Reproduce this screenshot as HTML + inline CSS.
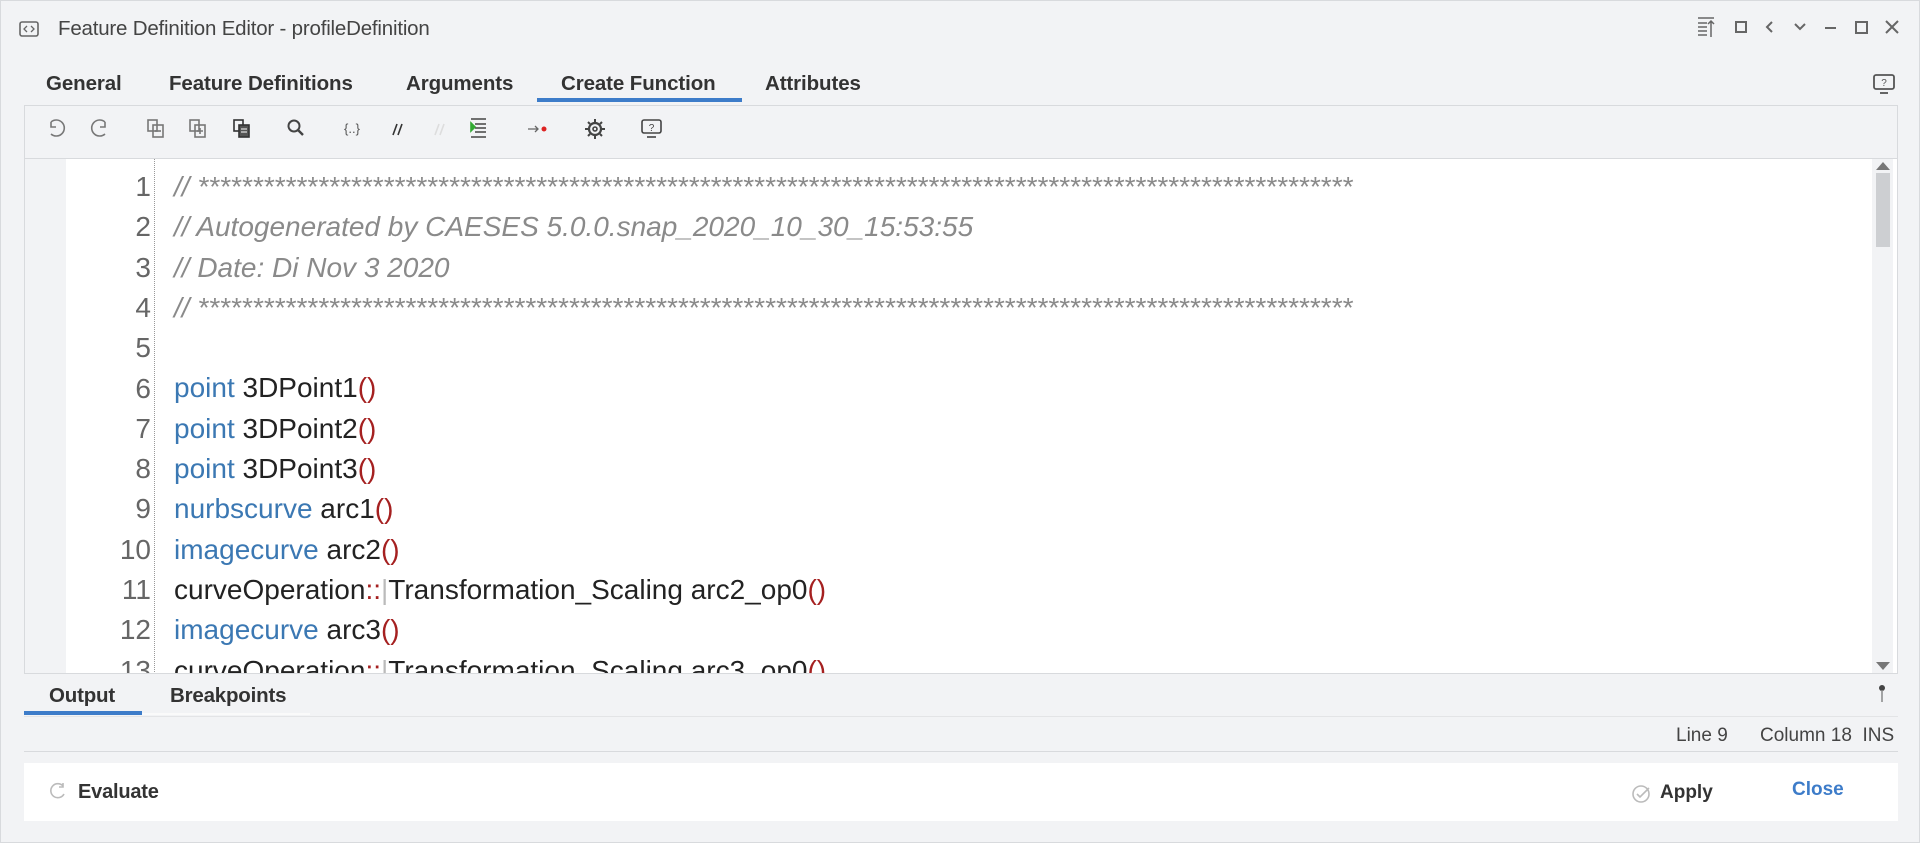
<!DOCTYPE html>
<html><head><meta charset="utf-8"><style>
*{margin:0;padding:0;box-sizing:border-box}
body{width:1920px;height:843px;background:#f2f3f5;font-family:"Liberation Sans",sans-serif;position:relative;overflow:hidden;border:1px solid #d8dadd}
.a{position:absolute;white-space:nowrap}
.tab{font-weight:bold;font-size:20.5px;color:#333;top:71px;letter-spacing:-0.1px}
.ln{position:absolute;right:0;width:80px;text-align:right;color:#666}
.code{font-size:28px;line-height:40.3px}
.cm{color:#8a8a8a;font-style:italic}
.kw{color:#3b78b3}
.p{color:#a52020}
</style></head><body>
<svg class="a" style="left:18px;top:20px" width="20" height="16" viewBox="0 0 20 16"><rect x="1" y="1" width="18" height="14" rx="2" fill="none" stroke="#666" stroke-width="1.6"/><path d="M8 5l-3 3 3 3M12 5l3 3-3 3" fill="none" stroke="#666" stroke-width="1.3"/></svg>
<div class="a" style="left:57px;top:16px;font-size:20.5px;color:#444;letter-spacing:-0.2px">Feature Definition Editor - profileDefinition</div>
<svg class="a" style="left:1695px;top:14px" width="210" height="26" viewBox="0 0 210 26" fill="none" stroke="#666" stroke-width="2">
<path d="M2 3h16M2 8h9M2 12h9M2 16h9M2 20h9M15 6v16M12 9l3-3 3 3" stroke-width="1.5"/>
<rect x="40" y="7" width="10" height="10"/>
<path d="M76 7l-5 5 5 5"/>
<path d="M99 9l5 5 5-5"/>
<path d="M129 13h11"/>
<rect x="160" y="7" width="11" height="11"/>
<path d="M190 6l12 12M202 6l-12 12"/>
</svg>
<div class="a tab" style="left:45px">General</div>
<div class="a tab" style="left:168px">Feature Definitions</div>
<div class="a tab" style="left:405px">Arguments</div>
<div class="a tab" style="left:560px">Create Function</div>
<div class="a tab" style="left:764px">Attributes</div>
<div class="a" style="left:536px;top:97px;width:205px;height:4px;background:#3d7cc9"></div>
<svg class="a" style="left:1871px;top:72px" width="24" height="22" viewBox="0 0 24 22" fill="none" stroke="#555" stroke-width="1.8"><rect x="2" y="2" width="20" height="14" rx="2"/><path d="M8 20h8"/><text x="12" y="13" font-size="10" fill="#555" stroke="none" text-anchor="middle" font-family="Liberation Sans">?</text></svg>
<div class="a" style="left:23px;top:104px;width:1874px;height:568px;border:1px solid #d8dadd;background:#f2f3f5"></div>
<svg class="a" style="left:40px;top:114px" width="640" height="28" viewBox="40 114 640 28" fill="none" stroke="#777" stroke-width="1.6">
<path d="M50 121a8 8 0 1 1 0 12M50 121v5h5" />
<path d="M104 121a8 8 0 1 0 0 12M104 121v5h-5"/>
<rect x="147" y="119" width="9" height="11"/><rect x="152" y="124" width="10" height="12"/><path d="M154 130h6"/>
<rect x="189" y="119" width="9" height="11"/><rect x="194" y="124" width="10" height="12"/><path d="M196 130h6M199 127v6"/>
<rect x="233" y="119" width="9" height="11" stroke="#333"/><rect x="238" y="124" width="10" height="12" fill="#555" stroke="#333"/><path d="M240 128h6M240 131h6" stroke="#fff" stroke-width="1"/>
<circle cx="293" cy="125" r="5.5" stroke="#444" stroke-width="2"/><path d="M297 129l5 5" stroke="#444" stroke-width="2.4"/>
<text x="343" y="132" font-size="13" fill="#555" stroke="none" font-family="Liberation Sans">{..}</text>
<path d="M392 134l4-11M397 134l4-11" stroke="#333"/>
<path d="M434 134l4-11M439 134l4-11" stroke="#ddd"/>
<path d="M470 118h15M474 123h11M474 127h11M474 131h11M470 136h15" stroke="#444"/><path d="M470 122l4 4-4 4z" fill="#3a3" stroke="#3a3"/>
<path d="M527 128h10M534 125l3 3-3 3" stroke="#666" stroke-width="1.3"/><circle cx="543" cy="128" r="2.5" fill="#d22" stroke="none"/>
<circle cx="594" cy="128" r="6" stroke="#444" stroke-width="2.2"/><circle cx="594" cy="128" r="2" stroke="#444"/><path d="M594 118v3M594 135v3M584 128h3M601 128h3M587 121l2 2M599 133l2 2M587 135l2-2M599 123l2-2" stroke="#444" stroke-width="2"/>
<rect x="641" y="119" width="19" height="13" rx="2" stroke="#444"/><path d="M646 136h9" stroke="#444"/><text x="650.5" y="130" font-size="10" fill="#444" stroke="none" text-anchor="middle" font-family="Liberation Sans">?</text>
</svg>
<div class="a" style="left:24px;top:157px;width:1872px;height:515px;background:#fff;border-top:1px solid #d8dadd;overflow:hidden">
 <div class="a" style="left:0;top:0;width:41px;height:515px;background:#f2f3f5"></div>
 <div class="a" style="left:129px;top:0;height:515px;border-left:1px dotted #999"></div>
 <div class="a code" style="left:46px;top:8px;width:80px;height:520px;color:#666">
  <div class="ln" style="top:0">1</div><div class="ln" style="top:40.3px">2</div><div class="ln" style="top:80.6px">3</div><div class="ln" style="top:120.9px">4</div><div class="ln" style="top:161.2px">5</div><div class="ln" style="top:201.5px">6</div><div class="ln" style="top:241.8px">7</div><div class="ln" style="top:282.1px">8</div><div class="ln" style="top:322.4px">9</div><div class="ln" style="top:362.7px">10</div><div class="ln" style="top:403px">11</div><div class="ln" style="top:443.3px">12</div><div class="ln" style="top:483.6px">13</div>
 </div>
 <div class="a code" style="left:149px;top:8px;color:#222">
  <div class="cm">// **********************************************************************************************************</div>
  <div class="cm">// Autogenerated by CAESES 5.0.0.snap_2020_10_30_15:53:55</div>
  <div class="cm">// Date: Di Nov 3 2020</div>
  <div class="cm">// **********************************************************************************************************</div>
  <div>&nbsp;</div>
  <div><span class="kw">point</span> 3DPoint1<span class="p">()</span></div>
  <div><span class="kw">point</span> 3DPoint2<span class="p">()</span></div>
  <div><span class="kw">point</span> 3DPoint3<span class="p">()</span></div>
  <div><span class="kw">nurbscurve</span> arc1<span class="p">()</span></div>
  <div><span class="kw">imagecurve</span> arc2<span class="p">()</span></div>
  <div>curveOperation<span class="p">::</span><span style="color:#bbb">|</span>Transformation_Scaling arc2_op0<span class="p">()</span></div>
  <div><span class="kw">imagecurve</span> arc3<span class="p">()</span></div>
  <div>curveOperation<span class="p">::</span><span style="color:#bbb">|</span>Transformation_Scaling arc3_op0<span class="p">()</span></div>
 </div>
 <div class="a" style="left:1847px;top:0;width:21px;height:515px;background:#f2f3f5"></div>
 <div class="a" style="left:1851px;top:14px;width:14px;height:74px;background:#cdcfd2"></div>
 <div class="a" style="left:1851px;top:3px;border:7px solid transparent;border-bottom:8px solid #777;border-top:0"></div>
 <div class="a" style="left:1851px;top:503px;border:7px solid transparent;border-top:8px solid #777;border-bottom:0"></div>
</div>
<div class="a" style="left:23px;top:672px;width:1874px;height:1px;background:#d8dadd"></div>
<div class="a" style="left:48px;top:683px;font-size:20.5px;font-weight:bold;color:#333;letter-spacing:-0.2px">Output</div>
<div class="a" style="left:169px;top:683px;font-size:20.5px;font-weight:bold;color:#333;letter-spacing:-0.2px">Breakpoints</div>
<div class="a" style="left:23px;top:710px;width:118px;height:4px;background:#3d7cc9"></div>
<div class="a" style="left:141px;top:712px;width:168px;height:2px;background:#fafafa"></div>
<div class="a" style="left:23px;top:715px;width:1874px;height:1px;background:#e3e4e6"></div>
<svg class="a" style="left:1877px;top:683px" width="8" height="20"><circle cx="4" cy="4" r="3" fill="#444"/><path d="M4 6v12" stroke="#888" stroke-width="1.5"/></svg>
<div class="a" style="left:1675px;top:724px;font-size:19px;color:#444">Line 9</div>
<div class="a" style="left:1759px;top:724px;font-size:19px;color:#444">Column 18&nbsp; INS</div>
<div class="a" style="left:23px;top:750px;width:1874px;height:1px;background:#d8dadd"></div>
<div class="a" style="left:23px;top:762px;width:1874px;height:58px;background:#fff"></div>
<svg class="a" style="left:47px;top:780px" width="20" height="20" fill="none" stroke="#bbb" stroke-width="1.6"><path d="M15 5a7 7 0 1 0 1 8M15 2v4h-4"/></svg>
<div class="a" style="left:77px;top:780px;font-size:20px;font-weight:bold;color:#333;letter-spacing:-0.2px">Evaluate</div>
<svg class="a" style="left:1630px;top:782px" width="22" height="22" fill="none" stroke="#bbb" stroke-width="1.6"><circle cx="10" cy="11" r="8"/><path d="M6 11l3 3 9-9"/></svg>
<div class="a" style="left:1659px;top:781px;font-size:19px;font-weight:bold;color:#333">Apply</div>
<div class="a" style="left:1791px;top:778px;font-size:19px;font-weight:bold;color:#3d7cc9">Close</div>
</body></html>
